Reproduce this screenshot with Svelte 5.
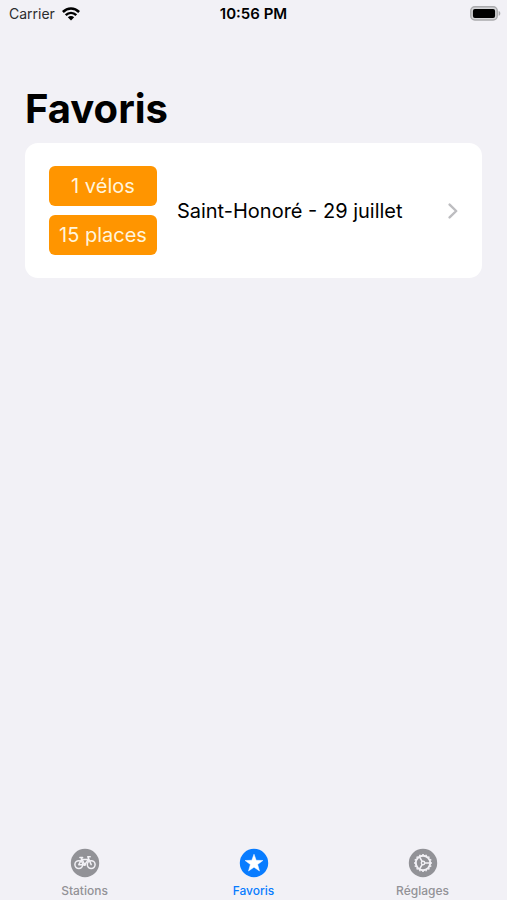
<svelte:head>
  <title>Favoris</title>
</svelte:head>

<script lang="ts">
  let selectedTab = 'favoris';

  const tabs: { id: string; name: string }[] = [
    { id: 'stations', name: 'Stations' },
    { id: 'favoris', name: 'Favoris' },
    { id: 'reglages', name: 'Réglages' }
  ];

  const favorites: { name: string; bikes: number; places: number }[] = [
    { name: 'Saint-Honoré - 29 juillet', bikes: 1, places: 15 }
  ];

  // angles of the teeth around the settings gear
  const teeth = Array.from({ length: 16 }, (_, i) => i * 22.5);
</script>

<div class="screen">
  <header class="status-bar">
    <div class="carrier">
      <span>Carrier</span>
      <svg width="18" height="14" viewBox="0 0 18 14" aria-hidden="true">
        <g fill="none" stroke="#000" stroke-width="2.5">
          <path d="M0.9 5C5.5 0.4 12.5 0.4 17.1 5" />
          <path d="M3.7 8.1C6.8 5.2 11.2 5.2 14.3 8.1" />
        </g>
        <path d="M5.8 10.2C7.7 8.5 10.3 8.5 12.2 10.2L9 13.4Z" />
      </svg>
    </div>
    <time>10:56 PM</time>
    <div class="battery">
      <svg width="31" height="15" viewBox="0 0 31 15" aria-hidden="true">
        <rect x="0.8" y="0.8" width="26.4" height="13.2" rx="4" fill="#d5d5d8" stroke="#aaaaad" stroke-width="1.5" />
        <rect x="2.9" y="2.9" width="22.2" height="9" rx="2" />
        <path d="M28.6 5C30.9 5.6 30.9 9.2 28.6 9.8Z" fill="#aaaaad" />
      </svg>
    </div>
  </header>

  <main>
    <h1>Favoris</h1>
    {#each favorites as { name, bikes, places } (name)}
      <a class="station" href="#station">
        <span class="counts">
          <span class="count">{bikes} vélos</span>
          <span class="count">{places} places</span>
        </span>
        <span class="name">{name}</span>
        <svg width="10" height="16" viewBox="0 0 10 16" aria-hidden="true">
          <path d="M1.6 1.6L8.2 8L1.6 14.4" fill="none" stroke="#bdbdc0" stroke-width="2.4" stroke-linecap="round" stroke-linejoin="round" />
        </svg>
      </a>
    {/each}
  </main>

  <nav>
    {#each tabs as { id, name } (id)}
      <button class:selected={selectedTab === id} on:click={() => (selectedTab = id)}>
        <svg width="30" height="30" viewBox="0 0 30 30" aria-hidden="true">
          <circle cx="15" cy="15" r="14.2" fill="currentColor" />
          {#if id === 'stations'}
            <g fill="none" stroke="#f2f1f6" stroke-width="1.5" stroke-linecap="round" stroke-linejoin="round">
              <circle cx="8.8" cy="16.6" r="3.9" />
              <circle cx="21.2" cy="16.6" r="3.9" />
              <path d="M8.8 16.6L11.6 11.4H18.6L14.6 16.7H8.8M14.6 16.7L11.2 9.8M9.9 9.4H12.6M21.2 16.6L17.8 8.8H20.2" />
            </g>
            <circle cx="14.6" cy="16.7" r="1.4" fill="#f2f1f6" />
          {:else if id === 'favoris'}
            <path d="M15 6.2L17.2 12.3L23.9 12.5L18.6 16.5L20.5 23L15 19.2L9.5 23L11.4 16.5L6.1 12.5L12.8 12.3Z" fill="#fff" stroke="#fff" stroke-width="0.5" stroke-linejoin="round" />
          {:else}
            <g fill="none" stroke="#f2f1f6">
              <circle cx="15" cy="15" r="7.2" stroke-width="2" />
              <circle cx="15" cy="15" r="1.7" stroke-width="1.4" />
              <path d="M16.8 15H22M14.1 13.4L11.5 8.9M14.1 16.6L11.5 21.1" stroke-width="1.6" />
              {#each teeth as angle}
                <path d="M15 7.2V6" stroke-width="1.6" transform="rotate({angle} 15 15)" />
              {/each}
            </g>
          {/if}
        </svg>
        <span>{name}</span>
      </button>
    {/each}
  </nav>
</div>

<style>
  :global(body) {
    margin: 0;
    background-color: #f2f1f6;
  }

  .screen {
    display: flex;
    flex-direction: column;
    min-height: 100vh;
    color: #000;
    font-family: Inter, "Liberation Sans", sans-serif;
  }

  .status-bar {
    display: grid;
    grid-template-columns: 1fr auto 1fr;
    align-items: center;
    height: 27px;
    padding: 0 6px;
    font-size: 15px;
  }

  .carrier {
    display: flex;
    align-items: center;
    gap: 7px;
    padding-left: 3px;
    color: #2c2c2e;
    font-size: 14px;
  }

  time {
    font-weight: 600;
  }

  .battery {
    display: flex;
    justify-content: flex-end;
  }

  main {
    flex: 1;
    padding: 56px 25px 0;
  }

  h1 {
    margin: 0 0 8px;
    font-size: 40px;
    font-weight: 700;
    line-height: 52px;
  }

  .station {
    display: flex;
    align-items: center;
    gap: 20px;
    padding: 23px 24px;
    border-radius: 13px;
    background-color: #fff;
    color: #000;
    font-size: 20px;
    text-decoration: none;
  }

  .counts {
    display: flex;
    flex-direction: column;
    gap: 9px;
  }

  .count {
    padding: 0 10px;
    border-radius: 6px;
    background-color: #ff9500;
    color: #fff4dc;
    line-height: 40px;
    text-align: center;
  }

  .name {
    flex: 1;
  }

  nav {
    display: grid;
    grid-template-columns: repeat(3, 1fr);
  }

  button {
    display: flex;
    flex-direction: column;
    align-items: center;
    gap: 5px;
    padding: 0 0 1px;
    border: none;
    background-color: transparent;
    color: #929297;
    font-family: inherit;
    font-size: 12px;
    font-weight: 500;
    line-height: 16px;
    cursor: pointer;
  }

  .selected {
    color: #087cff;
  }
</style>
